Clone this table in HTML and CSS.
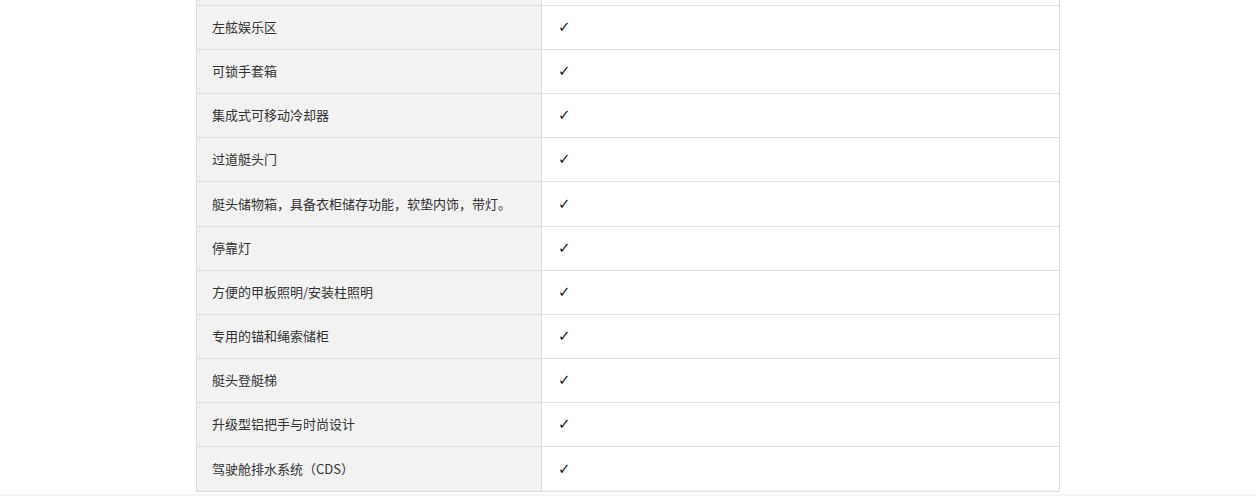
FILE: index.html
```html
<!DOCTYPE html>
<html lang="zh-CN">
<head>
<meta charset="utf-8">
<link rel="stylesheet" href="styles.css">
</head>
<body>
<div class="page">
  <div class="spec">
    <div class="row row-partial"><div class="name"></div><div class="val"></div></div>
    <div class="row"><div class="name">左舷娱乐区</div><div class="val">✓</div></div>
    <div class="row"><div class="name">可锁手套箱</div><div class="val">✓</div></div>
    <div class="row"><div class="name">集成式可移动冷却器</div><div class="val">✓</div></div>
    <div class="row"><div class="name">过道艇头门</div><div class="val">✓</div></div>
    <div class="row row-tall"><div class="name">艇头储物箱，具备衣柜储存功能，软垫内饰，带灯。</div><div class="val">✓</div></div>
    <div class="row"><div class="name">停靠灯</div><div class="val">✓</div></div>
    <div class="row"><div class="name">方便的甲板照明/安装柱照明</div><div class="val">✓</div></div>
    <div class="row"><div class="name">专用的锚和绳索储柜</div><div class="val">✓</div></div>
    <div class="row"><div class="name">艇头登艇梯</div><div class="val">✓</div></div>
    <div class="row"><div class="name">升级型铝把手与时尚设计</div><div class="val">✓</div></div>
    <div class="row row-tall"><div class="name">驾驶舱排水系统（CDS）</div><div class="val">✓</div></div>
  </div>
</div>
<div class="footer"></div>
</body>
</html>
```

FILE: styles.css
```css
html, body {
  margin: 0;
  padding: 0;
  background: #ffffff;
}
body {
  font-family: "Noto Sans CJK SC", "Noto Sans", sans-serif;
  font-size: 13px;
  color: #333333;
  height: 496px;
  overflow: hidden;
}
.page {
  height: 494px;
}
.spec {
  width: 862px;
  margin: 0 auto;
  border-left: 1px solid #dcdcdc;
  border-right: 1px solid #dcdcdc;
  border-bottom: 1px solid #dcdcdc;
}
.row {
  display: grid;
  grid-template-columns: 345px 1fr;
  height: 44px;
  border-top: 1px solid #dcdcdc;
  box-sizing: border-box;
}
.row-tall {
  height: 45px;
}
.row-partial {
  height: 5px;
  border-top: none;
}
.name {
  background: #f2f2f2;
  border-right: 1px solid #dcdcdc;
  padding: 0 0 2px 15px;
  display: flex;
  align-items: center;
}
.val {
  padding: 0 0 1px 16px;
  display: flex;
  align-items: center;
  font-family: "DejaVu Sans", sans-serif;
  font-size: 15px;
  color: #222;
}
.footer {
  height: 2px;
  background: #f5f5f5;
}
```
